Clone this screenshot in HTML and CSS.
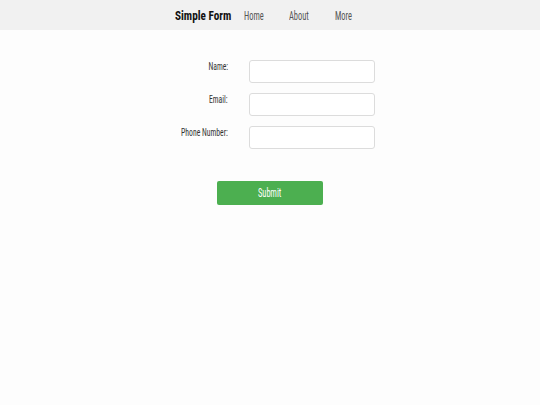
FILE: index.html
```html
<!DOCTYPE html>
<html lang="en">
<head>
<meta charset="utf-8">
<title>Simple Form</title>
<link rel="stylesheet" href="styles.css">
</head>
<body>
<header class="navbar">
  <nav class="nav-inner">
    <span class="brand"><span class="narrow narrow-brand">Simple Form</span></span>
    <a class="nav-link link-home" href="#"><span class="narrow">Home</span></a>
    <a class="nav-link link-about" href="#"><span class="narrow">About</span></a>
    <a class="nav-link link-more" href="#"><span class="narrow">More</span></a>
  </nav>
</header>
<main class="content">
  <form class="form">
    <div class="row">
      <label class="label" for="name"><span class="narrow narrow-right">Name:</span></label>
      <input class="field" id="name" type="text">
    </div>
    <div class="row">
      <label class="label" for="email"><span class="narrow narrow-right">Email:</span></label>
      <input class="field" id="email" type="email">
    </div>
    <div class="row">
      <label class="label" for="phone"><span class="narrow narrow-right">Phone Number:</span></label>
      <input class="field" id="phone" type="tel">
    </div>
    <div class="actions">
      <button class="submit" type="button"><span class="narrow narrow-center">Submit</span></button>
    </div>
  </form>
</main>
</body>
</html>
```
FILE: styles.css
```css
* { box-sizing: border-box; }
html, body {
  margin: 0;
  padding: 0;
  background: #fdfdfd;
  font-family: Roboto, "Liberation Sans", sans-serif;
  font-stretch: 75%;
}
.narrow {
  display: inline-block;
  white-space: nowrap;
  transform: scaleX(0.7);
  transform-origin: left center;
}
.narrow-brand { transform: scaleX(0.83); }
.narrow-right { transform-origin: right center; }
.narrow-center { transform-origin: center center; }

.navbar {
  height: 30px;
  background: #f1f1f1;
}
.nav-inner {
  width: 190px;
  margin: 0 auto;
  height: 30px;
  display: flex;
  align-items: center;
}
.brand {
  flex: 0 0 69px;
  font-weight: 700;
  font-size: 13.5px;
  line-height: 16px;
  color: #111;
  white-space: nowrap;
}
.nav-link {
  font-size: 12px;
  line-height: 14px;
  color: #555;
  text-decoration: none;
  white-space: nowrap;
  padding-top: 1px;
}
.link-home { flex: 0 0 45px; }
.link-about { flex: 0 0 46px; }
.link-more { flex: 0 0 30px; }

.content {
  padding-top: 30px;
}
.form {
  width: 210px;
  margin-left: calc(50% - 105px);
}
.row {
  display: grid;
  grid-template-columns: 63px 126px;
  column-gap: 21px;
  height: 23px;
  margin-bottom: 10px;
}
.label {
  display: flex;
  justify-content: flex-end;
  align-items: flex-start;
  font-size: 11px;
  line-height: 13px;
  color: #333;
  white-space: nowrap;
}
.field {
  width: 126px;
  height: 23px;
  border: 1px solid #dcdcdc;
  border-radius: 3px;
  background: #fff;
}
.actions {
  padding-top: 22px;
  padding-left: 52px;
}
.submit {
  width: 106px;
  height: 24px;
  border: none;
  border-radius: 2px;
  background: #4caf50;
  color: #fff;
  font-family: Roboto, "Liberation Sans", sans-serif;
  font-stretch: 75%;
  font-size: 12px;
  line-height: 14px;
  padding: 0;
}
```
